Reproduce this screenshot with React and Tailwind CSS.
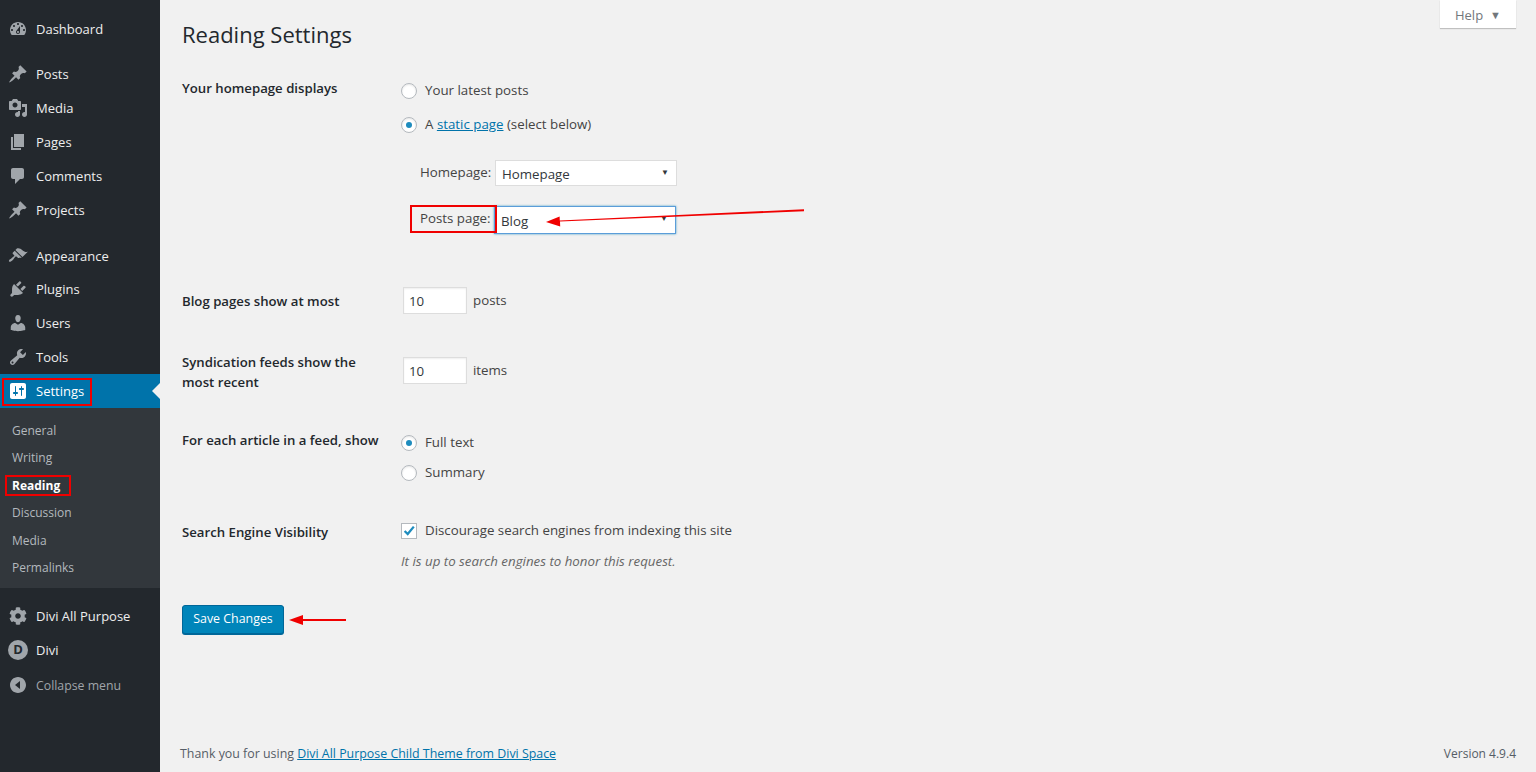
import React from "react";
import { FaCog } from "react-icons/fa";

const font = "[font-family:'Open_Sans','Noto_Sans',sans-serif]";

// dashicons, drawn on a 20x20 box
const paths = {
  dashboard:
    "M3.76 16h12.48c1.1-1.37 1.76-3.11 1.76-5 0-4.42-3.58-8-8-8s-8 3.58-8 8c0 1.89.66 3.63 1.76 5zM10 4c.55 0 1 .45 1 1s-.45 1-1 1-1-.45-1-1 .45-1 1-1zM6 6c.55 0 1 .45 1 1s-.45 1-1 1-1-.45-1-1 .45-1 1-1zm8 0c.55 0 1 .45 1 1s-.45 1-1 1-1-.45-1-1 .45-1 1-1zm-5.37 5.55L12 7v6c0 1.1-.9 2-2 2s-2-.9-2-2c0-.57.24-1.08.63-1.45zM4 10c.55 0 1 .45 1 1s-.45 1-1 1-1-.45-1-1 .45-1 1-1zm12 0c.55 0 1 .45 1 1s-.45 1-1 1-1-.45-1-1 .45-1 1-1zm-5 3c0-.55-.45-1-1-1s-1 .45-1 1 .45 1 1 1 1-.45 1-1z",
  post: "M10.44 3.02l1.82-1.82 6.36 6.35-1.83 1.82c-1.05-.68-2.48-.57-3.41.36l-.75.75c-.92.93-1.04 2.35-.35 3.41l-1.83 1.82-2.41-2.41-2.8 2.79c-.42.42-3.38 2.71-3.8 2.29s1.86-3.39 2.28-3.81l2.79-2.79L4.1 9.36l1.83-1.82c1.05.69 2.48.57 3.4-.36l.75-.75c.93-.92 1.05-2.35.36-3.41z",
  media:
    "M13 11V4c0-.55-.45-1-1-1h-1.67L9 1H5L3.67 3H2c-.55 0-1 .45-1 1v7c0 .55.45 1 1 1h10c.55 0 1-.45 1-1zM7 4.5c1.38 0 2.5 1.12 2.5 2.5S8.38 9.5 7 9.5 4.5 8.38 4.5 7 5.62 4.5 7 4.5zM14 6h5v10.5c0 1.38-1.12 2.5-2.5 2.5S14 17.88 14 16.5s1.12-2.5 2.5-2.5c.17 0 .34.02.5.05V9h-3V6zm-4 8.05V13h2v3.5c0 1.38-1.12 2.5-2.5 2.5S7 17.88 7 16.5 8.12 14 9.5 14c.17 0 .34.02.5.05z",
  page: "M6 15V2h10v13H6zm-1 1h8v2H3V5h2v11z",
  comments:
    "M5 2h9c1.1 0 2 .9 2 2v7c0 1.1-.9 2-2 2h-2l-5 5v-5H5c-1.1 0-2-.9-2-2V4c0-1.1.9-2 2-2z",
  appearance:
    "M14.48 11.06L7.41 3.99l1.5-1.5c.5-.56 2.3-.47 3.51.32 1.21.8 1.43 1.28 2.91 2.1 1.18.64 2.45 1.26 4.45.85zm-.71.71L6.7 4.7 4.93 6.47c-.39.39-.39 1.02 0 1.41l1.06 1.06c.39.39.39 1.03 0 1.42-.6.6-1.43 1.11-2.21 1.69-.35.26-.7.53-1.01.84C1.43 13.23.4 14.85 1.12 15.58c.73.72 2.35-.31 3.69-1.65.31-.31.58-.66.84-1.01.58-.78 1.09-1.61 1.69-2.21.39-.39 1.03-.39 1.42 0l1.06 1.06c.39.39 1.02.39 1.41 0z",
  plugins:
    "M13.11 4.36L9.87 7.6 8 5.73l3.24-3.24c.35-.34 1.05-.2 1.56.32.52.51.66 1.21.31 1.55zm-8 1.77l.91-1.12 9.01 9.01-1.19.84c-.71.71-2.63 1.16-3.82 1.16H6.14L4.9 17.26c-.59.59-1.54.59-2.12 0-.59-.58-.59-1.53 0-2.12l1.24-1.24v-3.88c0-1.13.4-3.19 1.09-3.89zm7.26 3.97l3.24-3.24c.34-.35 1.04-.21 1.55.31.52.51.66 1.21.31 1.55l-3.24 3.25z",
  users:
    "M10 9.25c-2.27 0-2.73-3.44-2.73-3.44C7 4.02 7.82 2 9.97 2c2.16 0 2.98 2.02 2.71 3.81 0 0-.41 3.44-2.68 3.44zm0 2.57L12.72 10c2.39 0 4.52 2.33 4.52 4.53v2.49s-3.65 1.13-7.24 1.13c-3.65 0-7.24-1.13-7.24-1.13v-2.49c0-2.25 1.94-4.48 4.47-4.48z",
  tools:
    "M16.68 9.77c-1.34 1.34-3.3 1.67-4.95.99l-5.41 6.52c-.99.99-2.59.99-3.58 0s-.99-2.59 0-3.57l6.52-5.42c-.68-1.65-.35-3.61.99-4.95 1.28-1.28 3.12-1.62 4.72-1.06l-2.89 2.89 2.82 2.82 2.86-2.87c.53 1.58.18 3.39-1.08 4.65zM3.81 16.21c.4.39 1.04.39 1.43 0 .4-.4.4-1.04 0-1.43-.39-.4-1.03-.4-1.43 0-.39.39-.39 1.03 0 1.43z",
  settings:
    "M18 16V4c0-1.1-.9-2-2-2H4c-1.1 0-2 .9-2 2v12c0 1.1.9 2 2 2h12c1.1 0 2-.9 2-2zM8 11h1c.55 0 1 .45 1 1s-.45 1-1 1H8v1.5c0 .28-.22.5-.5.5s-.5-.22-.5-.5V13H6c-.55 0-1-.45-1-1s.45-1 1-1h1V5.5c0-.28.22-.5.5-.5s.5.22.5.5V11zm5-2h-1c-.55 0-1-.45-1-1s.45-1 1-1h1V5.5c0-.28.22-.5.5-.5s.5.22.5.5V7h1c.55 0 1 .45 1 1s-.45 1-1 1h-1v5.5c0 .28-.22.5-.5.5s-.5-.22-.5-.5V9z",
  collapse: "M18 10c0-4.42-3.58-8-8-8s-8 3.58-8 8 3.58 8 8 8 8-3.58 8-8zm-6-4v8L7 10z",
};

const DashIcon = ({ name, className = "text-[#a0a5aa]" }) => (
  <svg viewBox="0 0 20 20" className={`w-5 h-5 shrink-0 ${className}`} fill="currentColor">
    <path d={paths[name]} />
  </svg>
);

const MenuItem = ({ icon, label, className = "" }) => (
  <div className={`flex items-center h-[34px] pl-2 ${className}`}>
    <DashIcon name={icon} />
    <span className="ml-2 pt-[2px] text-[#eeeeee] text-[13px]">{label}</span>
  </div>
);

const SubItem = ({ label, active }) => (
  <div
    className={`h-[27.5px] flex items-center pl-3 pt-[2px] text-[12px] ${
      active ? "text-white font-bold" : "text-[#b4b9be]"
    }`}
  >
    {label}
  </div>
);

const Radio = ({ checked, label }) => (
  <div className="flex items-center h-5">
    <span className="w-4 h-4 rounded-full bg-white border border-[#b4b9be] flex items-center justify-center shadow-[inset_0_1px_2px_rgba(0,0,0,0.1)]">
      {checked && <span className="w-[6px] h-[6px] rounded-full bg-[#1e8cbe]"></span>}
    </span>
    <span className="ml-2">{label}</span>
  </div>
);

const Select = ({ value, className }) => (
  <div className={`relative bg-white ${className}`}>
    <select
      defaultValue={value}
      className="appearance-none w-full h-full bg-transparent pl-[6px] pt-[3px] outline-none text-[#32373c] text-[13.3px]"
    >
      <option>{value}</option>
    </select>
    <span className="absolute right-[7px] top-[6px] text-[8px] leading-[10px] text-[#32373c]">▼</span>
  </div>
);

const NumberInput = () => (
  <input
    defaultValue="10"
    className="w-[64px] h-[27px] bg-white border border-[#dddddd] pl-[5px] text-[13.3px] text-[#32373c] outline-none shadow-[inset_0_1px_2px_rgba(0,0,0,0.07)]"
  />
);

const App = () => {
  return (
    <div className={`flex h-screen w-full overflow-hidden bg-[#f1f1f1] text-[13.3px] text-[#444444] ${font}`}>
      {/* sidebar */}
      <aside className="w-[160px] shrink-0 bg-[#23282d] pt-3 relative">
        <MenuItem icon="dashboard" label="Dashboard" />
        <MenuItem icon="post" label="Posts" className="mt-[11px]" />
        <MenuItem icon="media" label="Media" />
        <MenuItem icon="page" label="Pages" />
        <MenuItem icon="comments" label="Comments" />
        <MenuItem icon="post" label="Projects" />
        <MenuItem icon="appearance" label="Appearance" className="mt-3" />
        <MenuItem icon="plugins" label="Plugins" className="-mt-px" />
        <MenuItem icon="users" label="Users" />
        <MenuItem icon="tools" label="Tools" />
        <div className="relative flex items-center h-[34px] pl-2 bg-[#0073aa]">
          <DashIcon name="settings" className="text-white" />
          <span className="ml-2 pt-[2px] text-white text-[13px]">Settings</span>
          <span className="absolute right-0 top-[9px] border-y-8 border-r-8 border-y-transparent border-r-[#f1f1f1]"></span>
        </div>
        <div className="bg-[#32373c] pt-2 pb-[7px]">
          <SubItem label="General" />
          <SubItem label="Writing" />
          <SubItem label="Reading" active />
          <SubItem label="Discussion" />
          <SubItem label="Media" />
          <SubItem label="Permalinks" />
        </div>
        <div className="flex items-center h-[34px] pl-2 mt-[11px]">
          <FaCog className="w-[18px] h-[18px] ml-px mr-px text-[#a0a5aa] shrink-0" />
          <span className="ml-2 pt-[2px] text-[#eeeeee] text-[13px]">Divi All Purpose</span>
        </div>
        <div className="flex items-center h-[34px] pl-2">
          <span className="w-5 h-5 rounded-full bg-[#a0a5aa] text-[#23282d] font-bold text-[13px] flex items-center justify-center shrink-0">
            D
          </span>
          <span className="ml-2 pt-[2px] text-[#eeeeee] text-[13px]">Divi</span>
        </div>
        <div className="flex items-center h-[34px] pl-2 mt-px">
          <DashIcon name="collapse" />
          <span className="ml-2 pt-[2px] text-[#a0a5aa] text-[12.3px]">Collapse menu</span>
        </div>

        {/* red annotation boxes on the menu */}
        <div className="absolute left-[2px] top-[378px] w-[90px] h-[28px] border-2 border-[#f00000]"></div>
        <div className="absolute left-[5px] top-[475px] w-[66px] h-[21px] border-2 border-[#f00000]"></div>
      </aside>

      {/* content */}
      <main className="flex-1 relative flex flex-col pl-[22px] pr-5">
        <div className="absolute right-5 top-0 w-[76px] h-[28px] pt-[3px] bg-white shadow-[0_1px_1px_rgba(0,0,0,0.2)] flex items-center justify-center gap-[7px] text-[13px] text-[#72777c]">
          Help <span className="text-[11px] leading-none mb-[3px]">▼</span>
        </div>

        <h1 className="mt-[19px] h-[30px] leading-[30px] text-[22px] text-[#23282d] font-normal">Reading Settings</h1>

        <div className="flex mt-[29px]">
          <div className="w-[219px] shrink-0 h-5 leading-5 font-semibold text-[13.2px] text-[#23282d]">Your homepage displays</div>
          <div className="pt-[3px]">
            <Radio label="Your latest posts" />
            <div className="mt-[14px]">
              <Radio
                checked
                label={
                  <>
                    A <a className="text-[#0073aa] underline">static page</a> (select below)
                  </>
                }
              />
            </div>
            <div className="flex items-center mt-[25px] ml-[19px]">
              <span className="w-[75px] shrink-0 whitespace-nowrap">Homepage:</span>
              <Select value="Homepage" className="w-[182px] h-[26px] border border-[#dddddd]" />
            </div>
            <div className="flex items-center mt-5 ml-[19px]">
              <span className="w-[74px] shrink-0 whitespace-nowrap -mt-[2px]">Posts page:</span>
              <Select value="Blog" className="w-[182px] h-[28px] border border-[#5b9dd9] shadow-[0_0_2px_rgba(30,140,190,0.8)]" />
            </div>
          </div>
        </div>

        <div className="flex mt-[53px] items-center h-[27px]">
          <div className="w-[221px] shrink-0 font-semibold text-[13.2px] text-[#23282d] mt-[3px]">Blog pages show at most</div>
          <NumberInput />
          <span className="ml-[6px]">posts</span>
        </div>

        <div className="flex mt-[38px]">
          <div className="w-[221px] shrink-0 leading-5 font-semibold text-[13.2px] text-[#23282d]">
            Syndication feeds show the
            <br />
            most recent
          </div>
          <div className="flex items-center h-[27px] mt-[5px]">
            <NumberInput />
            <span className="ml-[6px]">items</span>
          </div>
        </div>

        <div className="flex mt-[38px]">
          <div className="w-[219px] shrink-0 leading-5 font-semibold text-[13.2px] text-[#23282d]">For each article in a feed, show</div>
          <div className="pt-[3px]">
            <Radio checked label="Full text" />
            <div className="mt-[10px]">
              <Radio label="Summary" />
            </div>
          </div>
        </div>

        <div className="flex mt-[38px]">
          <div className="w-[219px] shrink-0 leading-5 font-semibold text-[13.2px] text-[#23282d] mt-px">Search Engine Visibility</div>
          <div>
            <div className="flex items-center h-5">
              <span className="w-4 h-4 bg-white border border-[#b4b9be] flex items-center justify-center">
                <svg viewBox="0 0 16 16" className="w-[14px] h-[14px] text-[#1e8cbe]" fill="none" stroke="currentColor" strokeWidth="2.6">
                  <path d="M3 8l3.5 3.5L13.5 3" />
                </svg>
              </span>
              <span className="ml-2">Discourage search engines from indexing this site</span>
            </div>
            <p className="mt-[10px] leading-5 italic text-[#666666]">It is up to search engines to honor this request.</p>
          </div>
        </div>

        <button className="mt-[34px] w-[102px] h-[29px] rounded-[3px] bg-[#0085ba] border border-[#006799] text-white text-[12.4px] shadow-[0_1px_0_#006799]">
          Save Changes
        </button>

        <div className="mt-auto mb-2 flex justify-between text-[12.4px] text-[#555d66] -ml-[2px]">
          <span>
            Thank you for using <a className="text-[#0073aa] underline">Divi All Purpose Child Theme from Divi Space</a>
          </span>
          <span className="text-[12px]">Version 4.9.4</span>
        </div>

        {/* red annotations over the form */}
        <div className="absolute left-[250px] top-[205px] w-[87px] h-[28px] border-2 border-[#f00000]"></div>
        <svg className="absolute left-0 top-0 w-full h-full pointer-events-none" fill="#f00000" stroke="none">
          <path d="M644 209.2L644 211.2L400 221.6L400.2 226.4L386 222L399.6 216.6L399.8 220.6z" />
          <path d="M143 615l-14 5 14 5z" />
          <rect x="143" y="619" width="43" height="2" />
        </svg>
      </main>
    </div>
  );
};

export default App;
